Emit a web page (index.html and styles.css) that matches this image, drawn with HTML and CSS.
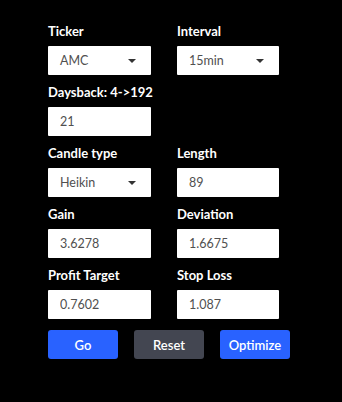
FILE: index.html
```html
<!DOCTYPE html>
<html lang="en">
<head>
    <meta charset="UTF-8">
    <title>Strategy Settings</title>
    <link rel="stylesheet" href="styles.css">
</head>
<body>
    <form class="settings">
        <div class="grid">
            <div class="field">
                <label>Ticker</label>
                <div class="select"><span>AMC</span><i class="caret"></i></div>
            </div>
            <div class="field">
                <label>Interval</label>
                <div class="select"><span>15min</span><i class="caret"></i></div>
            </div>

            <div class="field">
                <label>Daysback: 4-&gt;192</label>
                <input type="text" value="21">
            </div>
            <div class="field"></div>

            <div class="field">
                <label>Candle type</label>
                <div class="select"><span>Heikin</span><i class="caret"></i></div>
            </div>
            <div class="field">
                <label>Length</label>
                <input type="text" value="89">
            </div>

            <div class="field">
                <label>Gain</label>
                <input type="text" value="3.6278">
            </div>
            <div class="field">
                <label>Deviation</label>
                <input type="text" value="1.6675">
            </div>

            <div class="field">
                <label>Profit Target</label>
                <input type="text" value="0.7602">
            </div>
            <div class="field">
                <label>Stop Loss</label>
                <input type="text" value="1.087">
            </div>
        </div>

        <div class="buttons">
            <button type="button" class="btn primary">Go</button>
            <button type="button" class="btn secondary">Reset</button>
            <button type="button" class="btn primary">Optimize</button>
        </div>
    </form>
</body>
</html>
```

FILE: styles.css
```css
body {
    margin: 0;
    background-color: #000;
    font-family: Lato, "Open Sans", sans-serif;
    color: #fff;
}
.settings {
    padding: 23px 0 0 48px;
}
.grid {
    display: grid;
    grid-template-columns: 103px 102px;
    column-gap: 26px;
    row-gap: 9px;
}
.field {
    display: flex;
    flex-direction: column;
    gap: 7px;
}
label {
    font-size: 13px;
    font-weight: bold;
    line-height: 16px;
    white-space: nowrap;
}
input, .select {
    box-sizing: border-box;
    height: 29px;
    width: 100%;
    margin: 0;
    padding: 0 12px;
    border: none;
    border-radius: 1px;
    background: #fff;
    color: #505050;
    font-family: inherit;
    font-size: 12.5px;
}
.select {
    display: flex;
    align-items: center;
    justify-content: space-between;
    padding-right: 15px;
}
.caret {
    width: 0;
    height: 0;
    border-left: 4px solid transparent;
    border-right: 4px solid transparent;
    border-top: 4px solid #333;
}
.buttons {
    display: flex;
    gap: 16px;
    margin-top: 11px;
}
.btn {
    width: 70px;
    height: 29px;
    border: none;
    border-radius: 3px;
    color: #fff;
    font-family: inherit;
    font-size: 13px;
    font-weight: 600;
    cursor: pointer;
}
.primary {
    background-color: #2962ff;
}
.secondary {
    background-color: #434651;
}
```
